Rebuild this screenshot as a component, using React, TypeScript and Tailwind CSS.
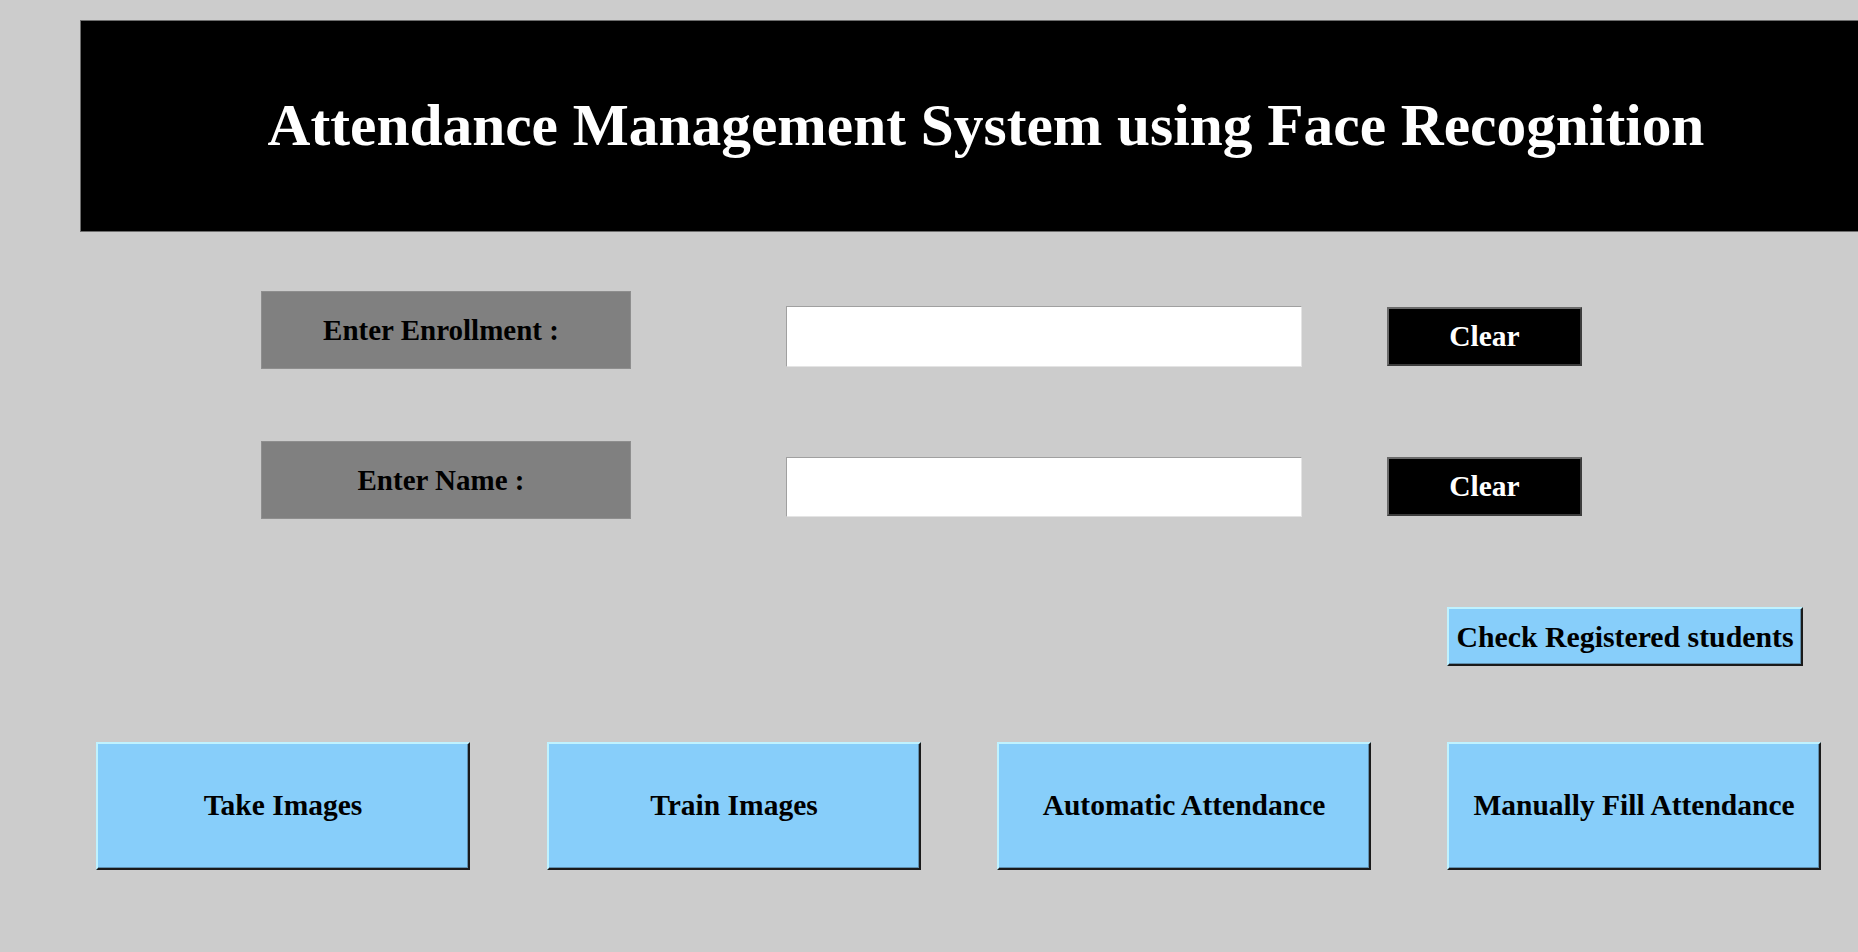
import React from "react";

const serif = { fontFamily: '"Liberation Serif", "Times New Roman", Times, serif' };

function BlueButton({ label, className }: { label: string; className: string }) {
  return (
    <div
      className={`flex items-center justify-center bg-[#87cefa] border-2 border-t-[#bff2ff] border-l-[#bff2ff] border-b-[#1a1a1a] border-r-[#1a1a1a] shadow-[inset_-1px_-1px_0_#5f8fae] text-black font-bold text-[29.5px] leading-none whitespace-nowrap ${className}`}
    >
      {label}
    </div>
  );
}

function ClearButton({ className }: { className: string }) {
  return (
    <div
      className={`flex items-center justify-center w-[195px] h-[59px] bg-black border-2 border-t-[#6a6a6a] border-l-[#6a6a6a] border-b-[#3c3c3c] border-r-[#3c3c3c] text-white font-bold text-[29.5px] leading-none ${className}`}
    >
      Clear
    </div>
  );
}

function FieldLabel({ label }: { label: string }) {
  return (
    <div className="flex items-center justify-center w-[370px] h-[78px] pr-[10px] bg-[#808080] border border-[#8e8e8e] text-black font-bold text-[29px] leading-none">
      {label}
    </div>
  );
}

function Entry({ className }: { className: string }) {
  return (
    <input
      type="text"
      className={`w-[516px] bg-white border border-t-[#a0a0a0] border-l-[#a0a0a0] border-b-[#e4e4e4] border-r-[#e4e4e4] outline-none px-1 text-[22px] ${className}`}
    />
  );
}

export default function App() {
  return (
    <div className="w-[1858px] h-[952px] overflow-hidden bg-[#cccccc] flex flex-col" style={serif}>
      {/* Header */}
      <div className="mt-[20px] ml-[80px] w-[1812px] h-[212px] shrink-0 bg-black border border-[#6d6d6d] flex items-center justify-center">
        <span className="text-white font-bold text-[59.4px] leading-none whitespace-nowrap">
          Attendance Management System using Face Recognition
        </span>
      </div>

      {/* Enrollment row */}
      <div className="mt-[59px] flex items-start">
        <div className="ml-[261px]">
          <FieldLabel label="Enter Enrollment :" />
        </div>
        <Entry className="ml-[155px] mt-[15px] h-[61px]" />
        <ClearButton className="ml-[85px] mt-[16px]" />
      </div>

      {/* Name row */}
      <div className="mt-[72px] flex items-start">
        <div className="ml-[261px]">
          <FieldLabel label="Enter Name :" />
        </div>
        <Entry className="ml-[155px] mt-[16px] h-[60px]" />
        <ClearButton className="ml-[85px] mt-[16px]" />
      </div>

      {/* Check registered */}
      <div className="mt-[88px] flex">
        <BlueButton label="Check Registered students" className="ml-[1447px] w-[356px] h-[59px] text-[29.8px]" />
      </div>

      {/* Bottom buttons */}
      <div className="mt-[76px] flex">
        <BlueButton label="Take Images" className="ml-[96px] w-[374px] h-[128px]" />
        <BlueButton label="Train Images" className="ml-[77px] w-[374px] h-[128px]" />
        <BlueButton label="Automatic Attendance" className="ml-[76px] w-[374px] h-[128px]" />
        <BlueButton label="Manually Fill Attendance" className="ml-[76px] w-[374px] h-[128px]" />
      </div>
    </div>
  );
}
